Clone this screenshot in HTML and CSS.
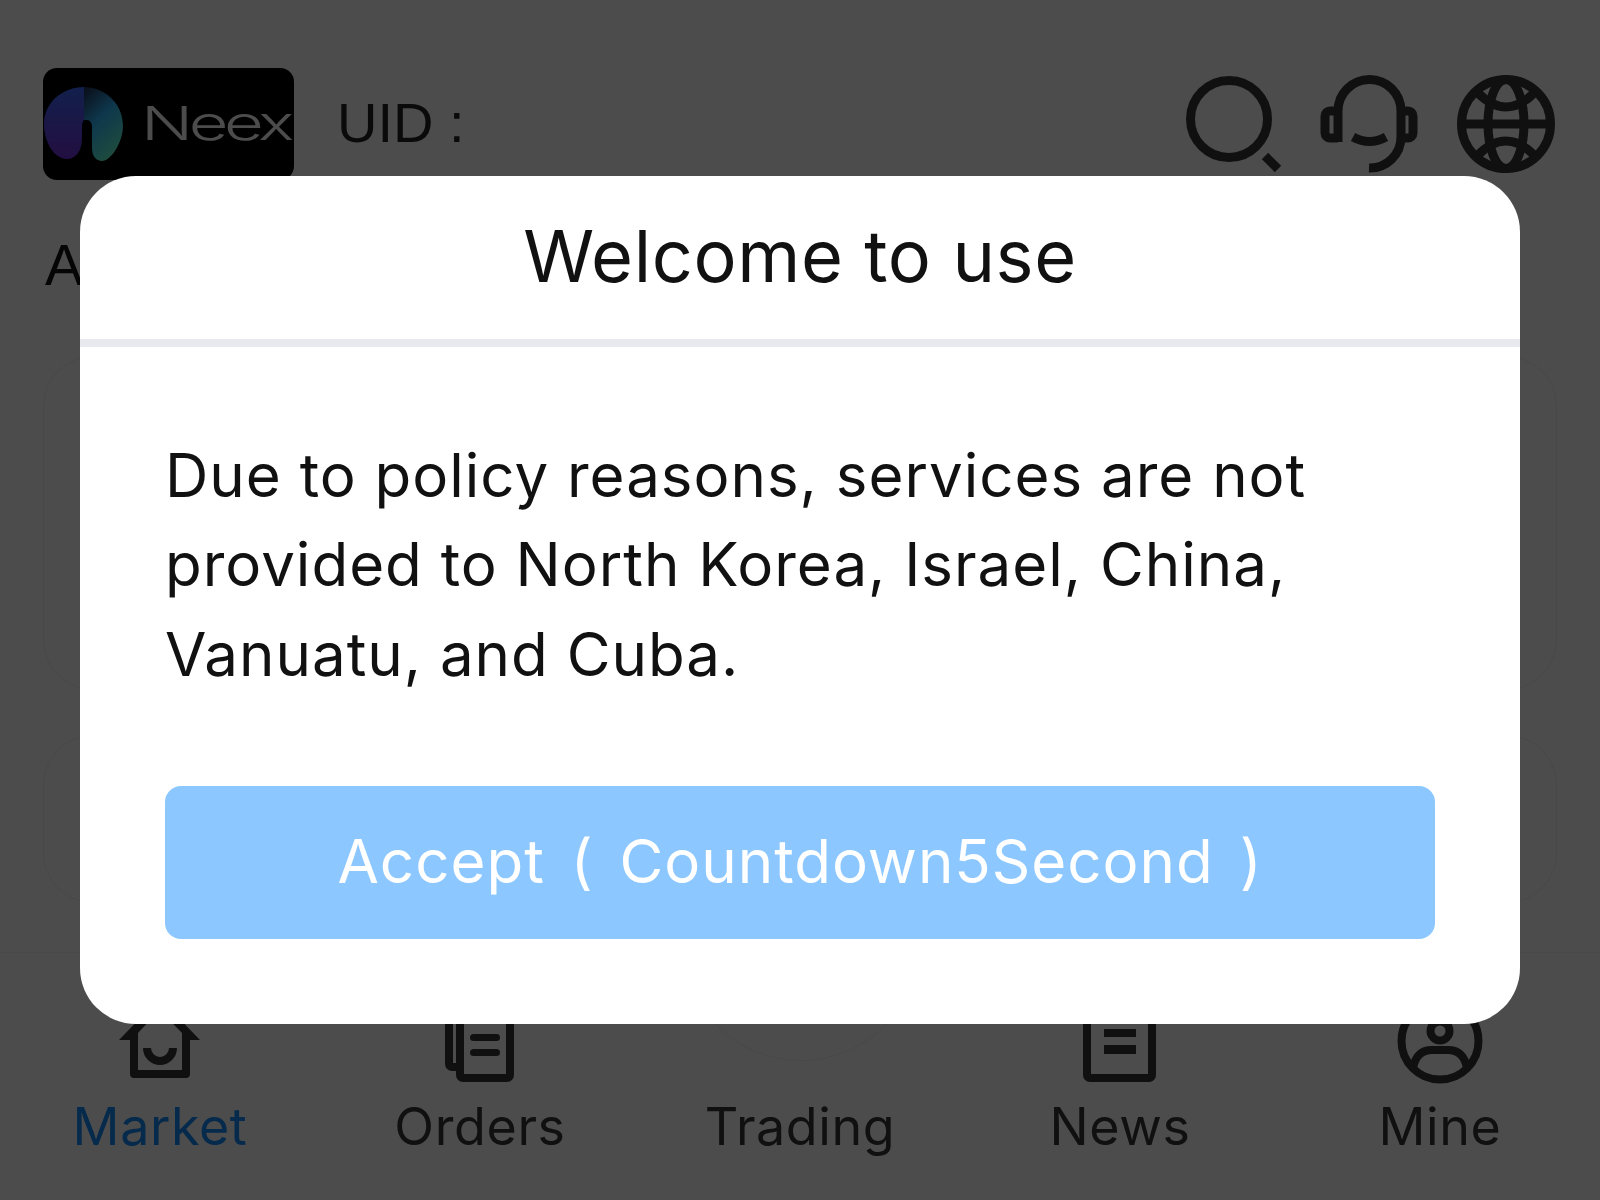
FILE: index.html
```html
<!DOCTYPE html>
<html lang="en">
<head>
  <meta charset="UTF-8" />
  <meta name="viewport" content="width=device-width, initial-scale=1.0" />
  <title>Neex – Market</title>
  <link rel="stylesheet" href="styles.css">
</head>
<body>

<div class="app">
  <header class="top">
    <div class="logo">
      <svg width="251" height="112" viewBox="0 0 251 112">
        <defs>
          <linearGradient id="lobe-left" x1="0" y1="0" x2="0" y2="1">
            <stop offset="0" stop-color="#3c6bff" />
            <stop offset="1" stop-color="#7532d9" />
          </linearGradient>
          <linearGradient id="lobe-right" x1="0.1" y1="0" x2="0.6" y2="1">
            <stop offset="0" stop-color="#21365a" />
            <stop offset="0.45" stop-color="#32b7ff" />
            <stop offset="1" stop-color="#64ffd0" />
          </linearGradient>
        </defs>
        <path fill="url(#lobe-left)" d="M41 19V52C40 53 39 55 39 59V70C39 83 33 91 24 91C11 91 1 74 1 56C1 34 20 19 41 19Z" />
        <path fill="url(#lobe-right)" d="M41 19C60 19 80 34 80 58C80 74 68 93 59 93C53 93 49 88 49 80V59C49 55 47 52 44 52C43 52 42 52 41 52Z" />
        <text class="logo-word" x="98" y="72" textLength="149" lengthAdjust="spacingAndGlyphs">Neex</text>
      </svg>
    </div>
    <div class="uid">UID :</div>
    <div class="top-icons">
      <svg class="icon" width="98" height="98" viewBox="0 0 98 98">
        <circle cx="43" cy="44" r="38.5" />
        <path d="M79 81 92 94" />
      </svg>
      <svg class="icon icon-gap" width="98" height="98" viewBox="0 0 98 98">
        <path d="M18 67V36a31.5 31.5 0 0 1 63 0V62a31 31 0 0 1-32 31" />
        <path d="M18 36H10a5 5 0 0 0-5 5v17a5 5 0 0 0 5 5H18" />
        <path d="M81 36H88a5 5 0 0 1 5 5v17a5 5 0 0 1-5 5H81" />
        <path d="M33 62Q49.5 71 66 62" />
      </svg>
      <svg class="icon icon-gap-wide" width="98" height="98" viewBox="0 0 98 98">
        <circle cx="49" cy="49" r="44.5" />
        <ellipse cx="49" cy="49" rx="18" ry="44.5" />
        <path d="M4 49H94" />
        <path d="M20 17Q49 47 78 17" />
        <path d="M20 81Q49 51 78 81" />
      </svg>
    </div>
  </header>

  <div class="section-title">Announcement</div>

  <div class="card card-tall"></div>
  <div class="card card-short"></div>

  <nav class="tabs">
    <div class="tab active">
      <svg class="tab-icon" width="100" height="100" viewBox="0 0 100 100">
        <path class="solid" fill-rule="evenodd" d="M9 55 49.5 13 90 55H80V89a4 4 0 0 1-4 4H24a4 4 0 0 1-4-4V55ZM49.5 25 28 48V85H72V48Z" />
        <path class="line" d="M37 63a13 13 0 0 0 26 0" />
      </svg>
      <span>Market</span>
    </div>
    <div class="tab">
      <svg class="tab-icon" width="100" height="100" viewBox="0 0 100 100">
        <rect class="line" x="30" y="5" width="50" height="88" rx="3" />
        <path class="line" d="M19 10V79a3 3 0 0 0 3 3H30" />
        <rect class="solid" x="40" y="49" width="30" height="7" rx="3.5" />
        <rect class="solid" x="40" y="64" width="30" height="7" rx="3.5" />
      </svg>
      <span>Orders</span>
    </div>
    <div class="tab tab-trade">
      <div class="tab-spacer"></div>
      <span>Trading</span>
    </div>
    <div class="tab">
      <svg class="tab-icon" width="100" height="100" viewBox="0 0 100 100">
        <rect class="line" x="17" y="5" width="65" height="88" rx="3" />
        <rect class="solid" x="34" y="44" width="32" height="8" />
        <rect class="solid" x="34" y="60" width="32" height="9" />
      </svg>
      <span>News</span>
    </div>
    <div class="tab">
      <svg class="tab-icon" width="100" height="100" viewBox="0 0 100 100">
        <circle class="line" cx="50" cy="56" r="38.5" />
        <circle class="line" cx="50" cy="46" r="9.5" />
        <path class="line" d="M23 83C26 67 36 65 42 65H58C64 65 74 67 77 83" />
      </svg>
      <span>Mine</span>
    </div>
  </nav>
</div>

<div class="overlay">
  <div class="modal">
    <div class="modal-title">Welcome to use</div>
    <div class="modal-body">
      <p>Due to policy reasons, services are not provided to North Korea, Israel, China, Vanuatu, and Cuba.</p>
      <button class="btn">Accept ( Countdown5Second )</button>
    </div>
  </div>
</div>

</body>
</html>
```

FILE: styles.css
```css
:root {
  --bg: #ffffff;
  --ink: #383838;
  --line: #f0f0f0;
  --text-main: #111;
}

* {
  margin: 0;
  padding: 0;
  box-sizing: border-box;
}

body {
  font-family: Inter, sans-serif;
  background: var(--bg);
  color: var(--ink);
  overflow: hidden;
}

.app {
  height: 1200px;
  display: flex;
  flex-direction: column;
}

.top {
  display: flex;
  align-items: center;
  padding: 68px 45px 0 43px;
}

.logo {
  width: 251px;
  height: 112px;
  background: #000;
  border-radius: 14px;
  overflow: hidden;
}

.logo svg {
  display: block;
}

.logo-word {
  font-family: Inter, sans-serif;
  font-size: 47px;
  font-weight: 300;
  letter-spacing: -3px;
  fill: #fff;
}

.uid {
  margin: -3px 0 0 43px;
  font-family: "Liberation Sans", sans-serif;
  font-size: 56px;
  color: #222;
}

.top-icons {
  margin-left: auto;
  display: flex;
  align-items: center;
}

.icon {
  display: block;
  fill: none;
  stroke: var(--ink);
  stroke-width: 9;
}

.icon-gap {
  margin-left: 36px;
}

.icon-gap-wide {
  margin-left: 39px;
}

.section-title {
  margin: 53px 0 0 45px;
  font-family: "Liberation Sans", sans-serif;
  font-size: 57px;
  line-height: 65px;
  color: #111;
}

.card {
  margin: 0 43px;
  border: 1px solid var(--line);
  border-radius: 50px;
}

.card-tall {
  margin-top: 58px;
  height: 334px;
}

.card-short {
  margin-top: 45px;
  height: 168px;
}

.tabs {
  margin-top: auto;
  height: 248px;
  border-top: 1px solid var(--line);
  padding-top: 32px;
  display: grid;
  grid-template-columns: repeat(5, 1fr);
}

.tab {
  display: flex;
  flex-direction: column;
  align-items: center;
  gap: 12px;
  font-size: 52px;
  line-height: 60px;
  letter-spacing: 0.6px;
}

.tab.active {
  color: #148cff;
}

.tab-icon,
.tab-spacer {
  display: block;
  width: 100px;
  height: 100px;
}

.tab-icon .solid {
  fill: var(--ink);
}

.tab-icon .line {
  fill: none;
  stroke: var(--ink);
  stroke-width: 8;
}

.tab-trade {
  position: relative;
}

.tab-trade::before {
  content: '';
  position: absolute;
  top: -162px;
  left: 42px;
  width: 236px;
  height: 236px;
  border: 1px solid var(--line);
  border-radius: 50%;
}

.tab-trade span {
  position: relative;
}

.overlay {
  position: fixed;
  inset: 0;
  background: rgba(0, 0, 0, 0.7);
  display: flex;
  align-items: center;
  justify-content: center;
}

.modal {
  width: 1440px;
  background: #fff;
  border-radius: 56px;
  color: var(--text-main);
}

.modal-title {
  height: 171px;
  padding-bottom: 4px;
  border-bottom: 8px solid #e8e9ee;
  display: flex;
  align-items: center;
  justify-content: center;
  font-size: 72px;
  letter-spacing: 0.6px;
}

.modal-body {
  padding: 84px 85px 85px;
}

.modal-body p {
  font-size: 60px;
  line-height: 89.6px;
  letter-spacing: 1px;
}

.btn {
  display: block;
  width: 100%;
  height: 153px;
  margin-top: 87px;
  padding-bottom: 4px;
  background: #8cc8ff;
  color: #fff;
  border: none;
  border-radius: 16px;
  font-family: inherit;
  font-size: 60px;
  letter-spacing: 1px;
  word-spacing: 8px;
}
```
